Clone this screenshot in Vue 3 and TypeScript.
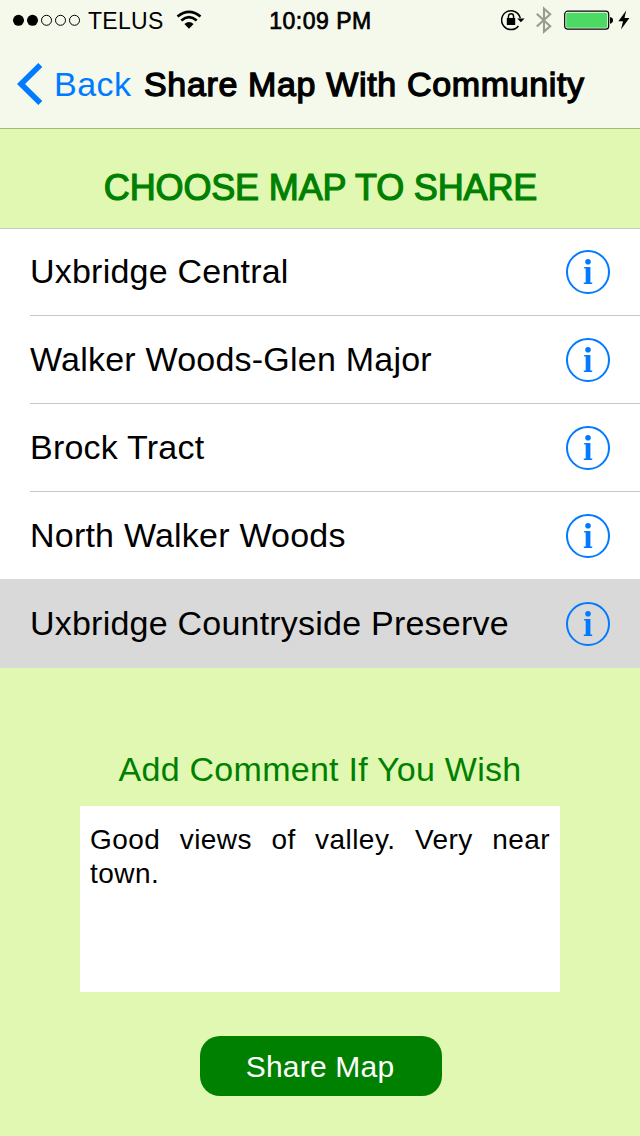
<script setup lang="ts">
import { ref } from 'vue'

const maps: string[] = [
  'Uxbridge Central',
  'Walker Woods-Glen Major',
  'Brock Tract',
  'North Walker Woods',
  'Uxbridge Countryside Preserve',
]
const selected = ref(4)
const comment = 'Good views of valley. Very near town.'
</script>

<template>
  <div class="screen">
    <header class="top">
      <div class="status">
        <div class="left">
          <svg class="signal" width="68" height="14" viewBox="0 0 68 14">
            <circle cx="6.5" cy="7.3" r="5.5" />
            <circle cx="20.5" cy="7.3" r="5.5" />
            <circle v-for="x in [34.5, 48.5, 62.5]" :key="x" class="empty" :cx="x" cy="7.3" r="5" />
          </svg>
          <span class="carrier">TELUS</span>
          <svg class="wifi" width="26" height="20" viewBox="0 0 26 20">
            <path d="M1.5 6.6Q13-2.8 24.5 6.6M5.3 10.4Q13 3.8 20.7 10.4" fill="none" stroke="#000" stroke-width="2.6" />
            <path d="M8.4 14Q13 10 17.6 14L13 18.8Z" />
          </svg>
        </div>
        <span class="time">10:09 PM</span>
        <div class="right">
          <svg class="lock" width="24" height="22" viewBox="0 0 24 22">
            <path d="M19.2 9.2A9.4 9.4 0 1 0 17.4 17" fill="none" stroke="#000" stroke-width="1.5" />
            <path d="M16.2 9.4H23.6L19.9 13.2Z" />
            <rect x="5.8" y="9" width="8.4" height="7" rx=".6" />
            <path d="M7.4 10V7.4a2.6 2.6 0 0 1 5.2 0V10" fill="none" stroke="#000" stroke-width="1.5" />
          </svg>
          <svg class="bluetooth" width="16" height="28" viewBox="0 0 16 28">
            <path d="M.8 7.8 14.2 20.2 8 25.6V2.6L14.2 8.2.8 20.6" fill="none" stroke="#989b91" stroke-width="2.1" />
          </svg>
          <svg class="battery" width="50" height="20" viewBox="0 0 50 20">
            <rect x=".7" y="1.2" width="44" height="18" rx="3" fill="none" stroke="#000" stroke-width="1.2" />
            <rect x="2.2" y="2.7" width="41" height="15" rx="1.5" fill="#4cd964" />
            <path d="M46 6.9Q49 7.4 49 10.3T46 13.8Z" />
          </svg>
          <svg class="bolt" width="12" height="20" viewBox="0 0 12 20">
            <path d="M8.2.4.4 11.2H5L3 19.4 11.4 8H6.5Z" />
          </svg>
        </div>
      </div>
      <nav class="nav">
        <a class="back">
          <svg width="26" height="42" viewBox="0 0 26 42">
            <path d="M23.3 2 4 21 23.3 40" fill="none" stroke="#007aff" stroke-width="5.7" />
          </svg>
          <span class="back-label">Back</span>
        </a>
        <h1 class="title">Share Map With Community</h1>
      </nav>
    </header>

    <h2 class="choose"><span>CHOOSE MAP TO SHARE</span></h2>

    <ul class="list">
      <li v-for="(name, i) in maps" :key="name" :class="['row', { on: i === selected }]" @click="selected = i">
        <div class="cell">
          <span class="name">{{ name }}</span>
          <svg class="info" width="44" height="44" viewBox="0 0 44 44">
            <circle cx="22" cy="22" r="21" fill="none" stroke="#007aff" stroke-width="2" />
            <circle cx="22" cy="11.7" r="2.8" fill="#007aff" />
            <path d="M18.2 17H24.4V32.5H26.2V34H17.8V32.5H19.7V18.4H18.2Z" fill="#007aff" />
          </svg>
        </div>
      </li>
    </ul>

    <section class="comment">
      <h3 class="prompt"><span>Add Comment If You Wish</span></h3>
      <div class="box">{{ comment }}</div>
      <button class="share" type="button"><span>Share Map</span></button>
    </section>
  </div>
</template>

<style>
body {
  margin: 0;
}
</style>

<style scoped>
.screen {
  width: 640px;
  height: 1136px;
  overflow: hidden;
  background: #e1f8b2;
  color: #000;
  font-family: "Liberation Sans", Arial, sans-serif;
}
svg {
  display: block;
  flex: none;
}
span,
h1 {
  white-space: nowrap;
}
.top {
  box-sizing: border-box;
  height: 129px;
  background: #f5f9eb;
  border-bottom: 1px solid #a3bb76;
}
.status {
  display: grid;
  grid-template-columns: 1fr auto 1fr;
  align-items: center;
  height: 40px;
  padding: 0 10px 0 12px;
  font-size: 23px;
}
.left,
.right {
  display: flex;
  align-items: center;
}
.right {
  justify-content: flex-end;
}
.empty {
  fill: none;
  stroke: #000;
  stroke-width: 1;
}
.carrier {
  margin: 2px 12px 0 8px;
  letter-spacing: 0.3px;
}
.time {
  margin: 2px 1px 0 0;
  letter-spacing: 0.5px;
  -webkit-text-stroke: 0.7px #000;
}
.bluetooth {
  margin: 0 12px 0 11px;
}
.bolt {
  margin-left: 4px;
}
.nav {
  display: flex;
  align-items: center;
  height: 88px;
  padding-left: 17px;
  font-size: 34px;
}
.back {
  display: flex;
  align-items: center;
  width: 127px;
  gap: 11px;
  color: #007aff;
  letter-spacing: 0.5px;
}
.title {
  margin: 0;
  font-size: 34px;
  font-weight: 400;
  letter-spacing: 0.65px;
  -webkit-text-stroke: 1.3px #000;
}
.choose {
  display: flex;
  justify-content: center;
  align-items: center;
  box-sizing: border-box;
  height: 99px;
  margin: 0;
  padding: 18px 0 0 1px;
  color: #008000;
  font-size: 36px;
  font-weight: 400;
  letter-spacing: -0.15px;
  -webkit-text-stroke: 1.2px #008000;
}
.list {
  margin: 0;
  padding: 0;
  list-style: none;
  background: #fff;
}
.row {
  padding-left: 30px;
}
.row:first-child {
  box-shadow: inset 0 1px #c8c7cc;
}
.cell {
  display: flex;
  justify-content: space-between;
  align-items: center;
  height: 88px;
  padding-right: 30px;
  box-shadow: inset 0 -1px #c8c7cc;
  font-size: 34px;
  letter-spacing: 0.22px;
}
.row:nth-last-child(-n + 2) .cell {
  box-shadow: none;
}
.name {
  margin-bottom: 1px;
}
.on {
  margin-top: -1px;
  padding-top: 1px;
  background: #d9d9d9;
}
.comment {
  display: flex;
  flex-direction: column;
  align-items: center;
  padding-top: 81px;
}
.prompt {
  height: 40px;
  margin: 0 0 17px;
  color: #008000;
  font-size: 34px;
  font-weight: 400;
  line-height: 40px;
  letter-spacing: 0.26px;
}
.box {
  box-sizing: border-box;
  width: 480px;
  height: 186px;
  padding: 17px 10px;
  background: #fff;
  font-size: 28px;
  line-height: 34px;
  letter-spacing: 0.45px;
  text-align: justify;
}
.share {
  width: 242px;
  height: 60px;
  margin: 44px 0 0 2px;
  padding: 2px 2px 0 0;
  border: 0;
  border-radius: 20px;
  background: #008000;
  color: #fff;
  font: 30px "Liberation Sans", Arial, sans-serif;
  letter-spacing: 0.2px;
}
</style>
